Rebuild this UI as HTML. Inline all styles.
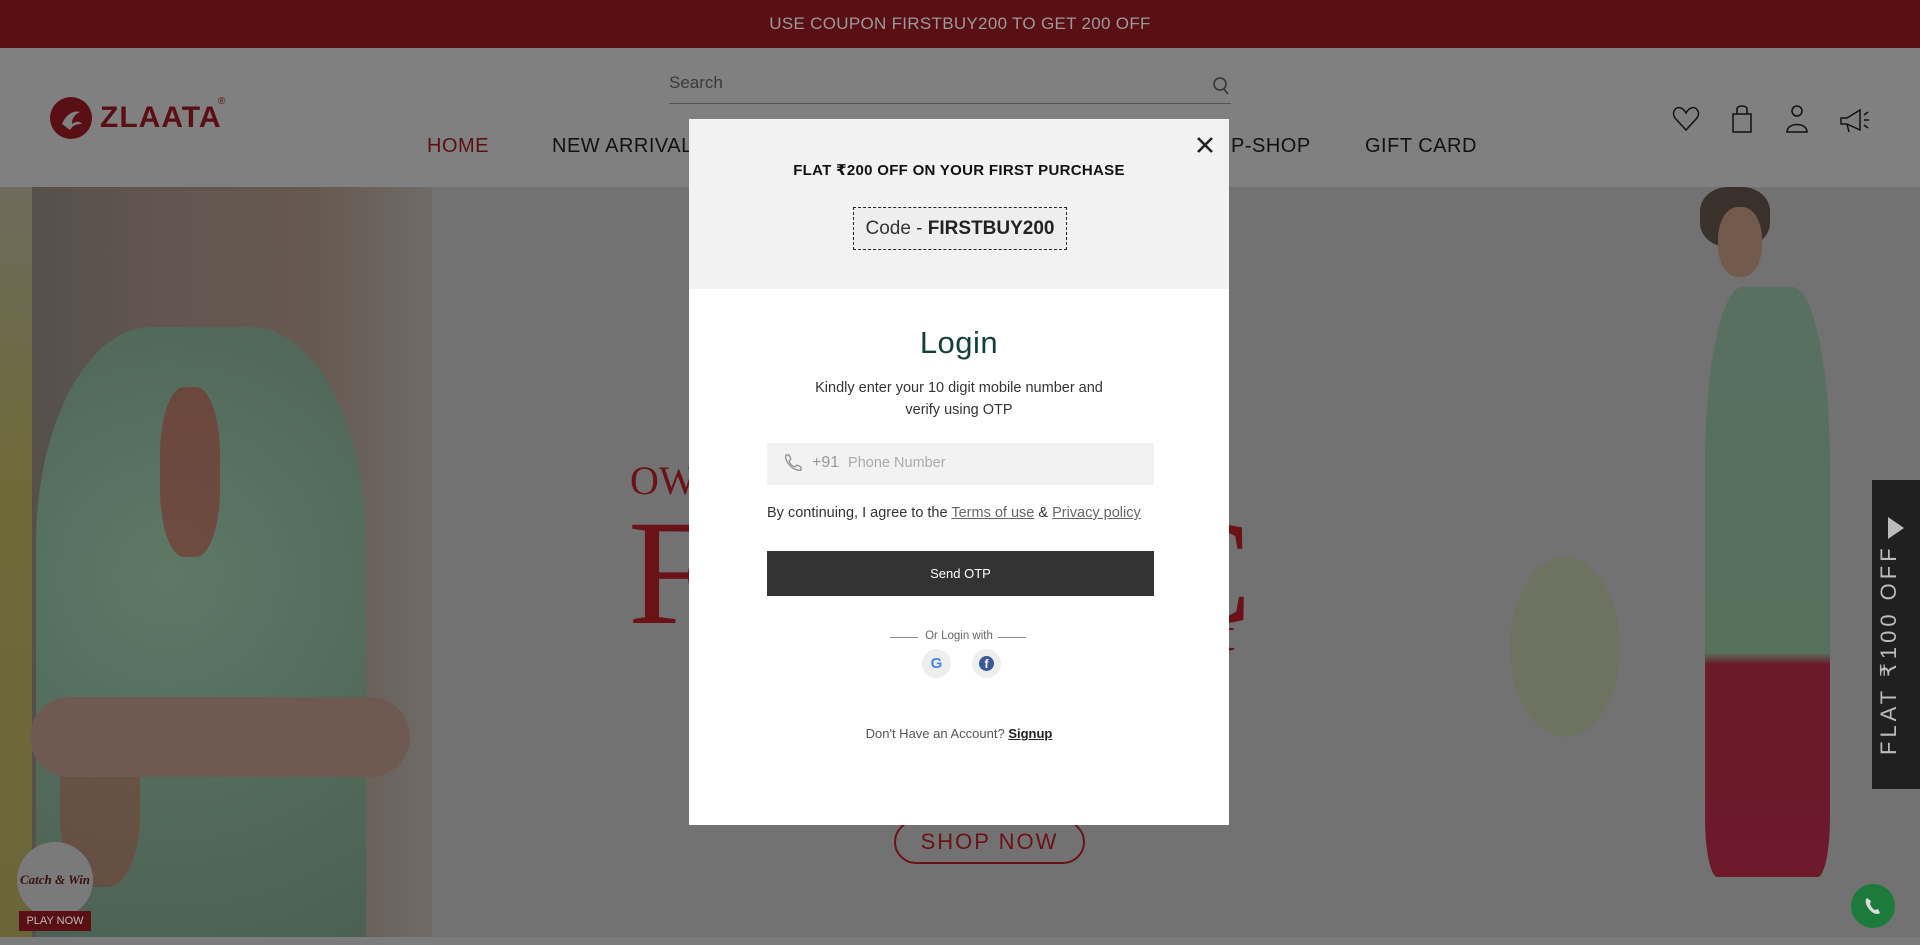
<!DOCTYPE html>
<html><head><meta charset="utf-8">
<style>
*{margin:0;padding:0;box-sizing:border-box}
body{width:1920px;height:945px;overflow:hidden;position:relative;background:#6f6f6f;font-family:"Liberation Sans","DejaVu Sans",sans-serif}
.abs{position:absolute}
.top{left:0;top:0;width:1920px;height:48px;background:#5a0f14;color:#9a9a9a;font-size:17px;text-align:center;line-height:48px;letter-spacing:.3px}
.hdr{left:0;top:48px;width:1920px;height:139px;background:#808080}
.nav{top:87px;font-size:20px;color:#111;letter-spacing:.5px}
.hero{left:0;top:187px;width:1920px;height:750px;background:#727272;overflow:hidden}
.modal{left:689px;top:119px;width:540px;height:706px;background:#fff}
.mtop{left:0;top:0;width:540px;height:170px;background:#f2f2f2}
.c{text-align:center;width:540px;left:0}
</style></head><body>
<div class="abs top">USE COUPON FIRSTBUY200 TO GET 200 OFF</div>
<div class="abs hdr">
  <div class="abs" style="left:669px;top:25px;font-size:17px;color:#3a3a3a">Search</div>
  <svg class="abs" style="left:1212px;top:28px" width="18" height="20"><circle cx="8" cy="8" r="6" fill="none" stroke="#333" stroke-width="1.5"/><path d="M12 13 L16 18" stroke="#333" stroke-width="1.5"/></svg>
  <div class="abs" style="left:669px;top:55px;width:562px;height:1px;background:#555"></div>
  <svg class="abs" style="left:49px;top:48px" width="44" height="44"><circle cx="22" cy="22" r="21" fill="#5a0f14"/><path d="M13 28c4-10 12-14 18-12-5 2-8 6-8 12 4-3 8-3 10 0-6 0-10 2-12 6z" fill="#808080"/></svg>
  <div class="abs" style="left:100px;top:53px;font-size:30px;font-weight:bold;color:#5a0f14;letter-spacing:1px">ZLAATA</div>
  <div class="abs" style="left:218px;top:48px;font-size:10px;color:#5a0f14">®</div>
  <div class="abs nav" style="left:427px;color:#5a0f14">HOME</div>
  <div class="abs nav" style="left:552px">NEW ARRIVAL</div>
  <div class="abs nav" style="left:1231px">P-SHOP</div>
  <div class="abs nav" style="left:1365px">GIFT CARD</div>
  <svg class="abs" style="left:1672px;top:56px" width="160" height="30" fill="none" stroke="#111" stroke-width="1.5">
    <path d="M14 26 L3 14 C-1 8 4 2 9 4 C11 5 13 7 14 9 C15 7 17 5 19 4 C24 2 29 8 25 14 Z"/>
    <rect x="61" y="10" width="18" height="18"/><path d="M65 10 V5 C65 1 75 1 75 5 V10"/>
    <circle cx="125" cy="7" r="5"/><path d="M115 28 C115 18 135 18 135 28 Z"/>
  </svg>
  <svg class="abs" style="left:1838px;top:58px" width="32" height="28" fill="none" stroke="#111" stroke-width="1.5"><path d="M3 12 H9 L22 4 V24 L9 18 H3 Z M9 18 L11 26 M26 9 L30 6 M26 14 H31 M26 19 L30 22"/></svg>
</div>
<div class="abs hero">
  <div class="abs" style="left:0;top:0;width:32px;height:750px;background:linear-gradient(#6e6a5c,#6e6a38 40%,#6a6638)"></div>
  <div class="abs" style="left:32px;top:0;width:400px;height:750px;background:linear-gradient(90deg,#56504a 0,#635650 35%,#66594f 70%,#6f6b68 100%)"></div>
  <div class="abs" style="left:36px;top:140px;width:330px;height:620px;border-radius:35% 35% 0 0;background:radial-gradient(circle at 40% 40%,#5e7866,#52695a 60%,#4b6052)"></div>
  <div class="abs" style="left:160px;top:200px;width:60px;height:170px;background:#7a2e2a;opacity:.6;border-radius:40%"></div>
  <div class="abs" style="left:60px;top:520px;width:80px;height:180px;background:#7a3a2e;opacity:.5;border-radius:40%"></div>
  <div class="abs" style="left:30px;top:510px;width:380px;height:80px;border-radius:40px;background:#6e5a50"></div>
  <div class="abs" style="left:630px;top:270px;font-family:'Liberation Serif',serif;font-size:40px;color:#6a1216">OW</div>
  <div class="abs" style="left:628px;top:300px;font-family:'Liberation Serif',serif;font-size:150px;color:#6a1216">F</div>
  <div class="abs" style="left:1152px;top:300px;font-family:'Liberation Serif',serif;font-size:150px;color:#6a1216">C</div>
  <div class="abs" style="left:1200px;top:420px;font-family:'Liberation Serif',serif;font-size:48px;color:#6a1216">at</div>
  <div class="abs" style="left:894px;top:633px;width:191px;height:44px;border:2px solid #6a1216;border-radius:22px;color:#6a1216;font-size:22px;text-align:center;line-height:40px;letter-spacing:2px">SHOP NOW</div>
  <div class="abs" style="left:1700px;top:0px;width:70px;height:60px;background:#3a302c;border-radius:40%"></div>
  <div class="abs" style="left:1718px;top:20px;width:44px;height:70px;background:#725a4c;border-radius:45%"></div>
  <div class="abs" style="left:1705px;top:100px;width:125px;height:590px;border-radius:30% 30% 10% 10%;background:linear-gradient(#587060,#56705c 62%,#6a1a28 64%,#6c1a2c)"></div>
  <div class="abs" style="left:1510px;top:370px;width:110px;height:180px;border-radius:50%;background:#687250;opacity:.5"></div>
  <div class="abs" style="left:1872px;top:293px;width:48px;height:309px;background:#202020"></div>
  <div class="abs" style="left:1876px;top:568px;transform:rotate(-90deg);transform-origin:left top;font-size:22px;color:#bbb;letter-spacing:4px;white-space:nowrap;width:220px">FLAT ₹100 OFF</div>
  <svg class="abs" style="left:1888px;top:330px" width="16" height="22"><path d="M0 0 L16 11 L0 22Z" fill="#bbb"/></svg>
  <div class="abs" style="left:17px;top:655px;width:76px;height:76px;border-radius:50%;background:#7a7a7a;font-family:'Liberation Serif',serif;font-style:italic;font-weight:bold;font-size:13px;color:#3a1010;text-align:center;line-height:76px">Catch &amp; Win</div>
  <div class="abs" style="left:19px;top:724px;width:72px;height:20px;background:#5a0f14;color:#bbb;font-size:11px;text-align:center;line-height:20px">PLAY NOW</div>
  <div class="abs" style="left:1851px;top:697px;width:44px;height:44px;border-radius:50%;background:#1c7a3a"></div>
  <svg class="abs" style="left:1861px;top:707px" width="24" height="24"><path d="M6 4 C4 6 4 10 8 15 C12 20 16 21 19 19 L17 15 L14 16 C12 15 10 13 9 10 L10 7 Z" fill="#ddd"/></svg>
</div>
<div class="abs" style="left:0;top:937px;width:1920px;height:8px;background:#7c7c7c"></div>
<div class="abs modal">
  <div class="abs mtop"></div>
  <svg class="abs" style="left:507px;top:17px" width="18" height="18"><path d="M2 2 L16 16 M16 2 L2 16" stroke="#222" stroke-width="2.6"/></svg>
  <div class="abs c" style="top:42px;font-size:15px;font-weight:bold;color:#111;letter-spacing:.3px">FLAT ₹200 OFF ON YOUR FIRST PURCHASE</div>
  <div class="abs" style="left:164px;top:88px;width:214px;height:43px;border:1px dashed #222;background:#eee;text-align:center;line-height:41px;font-size:19px;color:#333">Code - <b style="color:#222">FIRSTBUY200</b></div>
  <div class="abs c" style="top:206px;font-size:31px;color:#12403a;letter-spacing:.5px">Login</div>
  <div class="abs c" style="top:258px;font-size:14.5px;color:#333;line-height:22px">Kindly enter your 10 digit mobile number and<br>verify using OTP</div>
  <div class="abs" style="left:78px;top:324px;width:387px;height:42px;background:#f2f2f2"></div>
  <svg class="abs" style="left:93px;top:334px" width="20" height="20" fill="none" stroke="#888" stroke-width="1.2"><path d="M4 2 L7 2 L9 6 L7 8 C8 11 10 13 13 14 L15 12 L19 14 L19 17 C12 19 2 9 4 2Z"/></svg>
  <div class="abs" style="left:123px;top:335px;font-size:16px;color:#999">+91 &nbsp;<span style="font-size:14.5px;color:#aaa">Phone Number</span></div>
  <div class="abs" style="left:78px;top:386px;font-size:14.5px;color:#333;white-space:nowrap">By continuing, I agree to the <u style="color:#666">Terms of use</u> &amp; <u style="color:#666">Privacy policy</u></div>
  <div class="abs" style="left:78px;top:432px;width:387px;height:45px;background:#333;color:#fff;font-size:13px;text-align:center;line-height:45px">Send OTP</div>
  <div class="abs" style="left:201px;top:518px;width:28px;height:1px;background:#888"></div>
  <div class="abs c" style="top:511px;font-size:11.5px;color:#666">Or Login with</div>
  <div class="abs" style="left:309px;top:518px;width:28px;height:1px;background:#888"></div>
  <div class="abs" style="left:233px;top:530px;width:29px;height:29px;border-radius:50%;background:#eee"></div>
  <div class="abs" style="left:233px;top:530px;width:29px;height:29px;text-align:center;line-height:29px;font-weight:bold;font-size:15px;color:#4285f4">G</div>
  <div class="abs" style="left:283px;top:530px;width:29px;height:29px;border-radius:50%;background:#eee"></div>
  <div class="abs" style="left:290px;top:537px;width:15px;height:15px;border-radius:50%;background:#3b5998;color:#fff;font-size:12px;font-weight:bold;text-align:center;line-height:17px">f</div>
  <div class="abs c" style="top:607px;font-size:13px;color:#555">Don't Have an Account? <b style="color:#222;text-decoration:underline">Signup</b></div>
</div>
</body></html>
